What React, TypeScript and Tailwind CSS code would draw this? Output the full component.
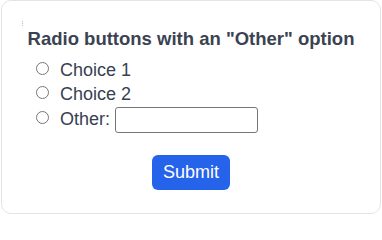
import { useState } from 'react';

export default function App() {
  const [choice, setChoice] = useState('');
  const [other, setOther] = useState('');

  return (
    <div className="w-[382px] h-[215px] bg-white pl-[1px]" style={{ fontFamily: '"Liberation Sans", Arial, sans-serif' }}>
      <form
        onSubmit={(e) => e.preventDefault()}
        className="relative w-[380px] h-[214px] rounded-[10px] border border-[#e2e4e8] bg-white text-[#374151] pt-[27px]"
      >
        {/* tiny dotted mark near top-left */}
        <span className="absolute left-[20px] top-[20px] h-[5px] w-px border-l border-dotted border-[#b8bcc4]" />

        <h2 className="text-center text-[18.5px] font-bold leading-[22px] text-[#3b4252]">Radio buttons with an "Other" option</h2>

        <div className="mt-[8px] pl-[33px] flex flex-col">
          <label className="flex items-center h-[24px] text-[18px]">
            <input
              type="radio"
              name="choice"
              checked={choice === '1'}
              onChange={() => setChoice('1')}
              className="m-0 h-[13px] w-[13px] ml-[1px] mr-[11px] -mt-[4px]"
            />
            Choice 1
          </label>
          <label className="flex items-center h-[24px] text-[18px]">
            <input
              type="radio"
              name="choice"
              checked={choice === '2'}
              onChange={() => setChoice('2')}
              className="m-0 h-[13px] w-[13px] ml-[1px] mr-[11px] -mt-[4px]"
            />
            Choice 2
          </label>
          <label className="flex items-center h-[26px] text-[18px]">
            <input
              type="radio"
              name="choice"
              checked={choice === 'other'}
              onChange={() => setChoice('other')}
              className="m-0 h-[13px] w-[13px] ml-[1px] mr-[11px] -mt-[4px]"
            />
            Other:
            <input
              type="text"
              value={other}
              onChange={(e) => setOther(e.target.value)}
              className="ml-[5px] mt-[1px] h-[26px] w-[143px] rounded-[3px] border border-[#767676] px-1 text-[15px]"
            />
          </label>
        </div>

        <div className="mt-[23px] flex justify-center">
          <button type="submit" className="h-[35px] w-[78px] rounded-[6px] bg-[#2563eb] text-[18px] text-white">
            Submit
          </button>
        </div>
      </form>
    </div>
  );
}
